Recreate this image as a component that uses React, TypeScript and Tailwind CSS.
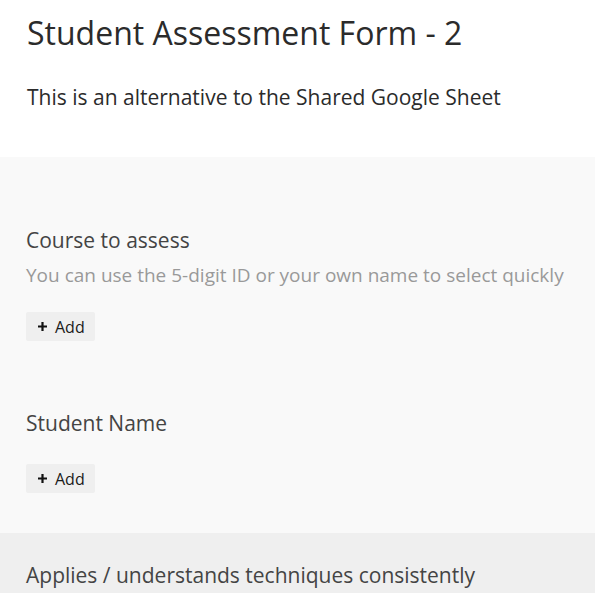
function AddButton({ className }: { className: string }) {
  return (
    <button className={`${className} flex items-center bg-[#efefef] rounded-[2px] h-[29px] w-[69px] pl-[12px] text-[16px] text-[#1a1a1a]`}>
      <svg width="9" height="9" viewBox="0 0 9 9" className="mr-[8px]">
        <path d="M4.5 0v9M0 4.5h9" stroke="#111" strokeWidth="2.2" />
      </svg>
      <span className="leading-none">Add</span>
    </button>
  );
}

export default function App() {
  const font = { fontFamily: '"Open Sans", "Noto Sans", sans-serif' };
  return (
    <div className="w-[595px] h-[593px] overflow-hidden bg-white" style={font}>
      <div className="bg-white px-[27px] pt-[13px] h-[157px]">
        <h1 className="text-[32px] leading-[40px] text-[#2b2b2b] font-normal">Student Assessment Form - 2</h1>
        <p className="mt-[30px] text-[21px] leading-[28px] text-[#2b2b2b]">This is an alternative to the Shared Google Sheet</p>
      </div>
      <div className="bg-[#f9f9f9] px-[26px] pt-[69px] h-[376px]">
        <div className="text-[21px] leading-[28px] text-[#444]">Course to assess</div>
        <div className="mt-[8px] text-[19px] leading-[26px] text-[#999]">You can use the 5-digit ID or your own name to select quickly</div>
        <AddButton className="mt-[24px]" />
        <div className="mt-[68px] text-[21px] leading-[28px] text-[#444]">Student Name</div>
        <AddButton className="mt-[27px]" />
      </div>
      <div className="bg-[#efefef] px-[26px] pt-[28px] h-[60px]">
        <div className="text-[21px] leading-[28px] text-[#444]">Applies / understands techniques consistently</div>
      </div>
    </div>
  );
}
